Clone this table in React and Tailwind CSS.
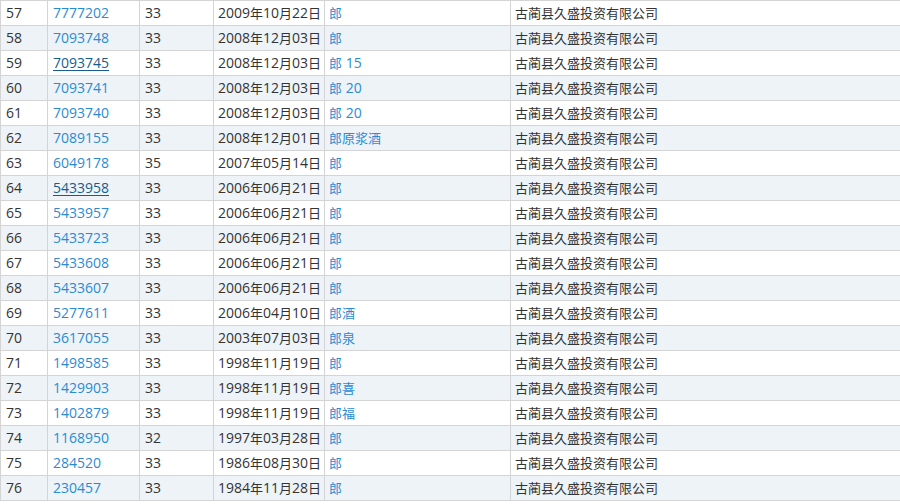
import React from "react";

const rows = [
  [57, "7777202", "33", "2009年10月22日", "郎"],
  [58, "7093748", "33", "2008年12月03日", "郎"],
  [59, "7093745", "33", "2008年12月03日", "郎 15", true],
  [60, "7093741", "33", "2008年12月03日", "郎 20"],
  [61, "7093740", "33", "2008年12月03日", "郎 20"],
  [62, "7089155", "33", "2008年12月01日", "郎原浆酒"],
  [63, "6049178", "35", "2007年05月14日", "郎"],
  [64, "5433958", "33", "2006年06月21日", "郎", true],
  [65, "5433957", "33", "2006年06月21日", "郎"],
  [66, "5433723", "33", "2006年06月21日", "郎"],
  [67, "5433608", "33", "2006年06月21日", "郎"],
  [68, "5433607", "33", "2006年06月21日", "郎"],
  [69, "5277611", "33", "2006年04月10日", "郎酒"],
  [70, "3617055", "33", "2003年07月03日", "郎泉"],
  [71, "1498585", "33", "1998年11月19日", "郎"],
  [72, "1429903", "33", "1998年11月19日", "郎喜"],
  [73, "1402879", "33", "1998年11月19日", "郎福"],
  [74, "1168950", "32", "1997年03月28日", "郎"],
  [75, "284520", "33", "1986年08月30日", "郎"],
  [76, "230457", "33", "1984年11月28日", "郎"],
];

// CJK glyphs render a touch smaller than the digits in the original page
function Mixed({ text }) {
  const parts = text.match(/[\u4e00-\u9fff]+|[^\u4e00-\u9fff]+/g) || [];
  return parts.map((p, i) =>
    /[\u4e00-\u9fff]/.test(p) ? (
      <span key={i} className="text-[13px]">
        {p}
      </span>
    ) : (
      <span key={i}>{p}</span>
    )
  );
}

export default function App() {
  return (
    <div
      className="w-[900px] h-[504px] overflow-hidden bg-white text-[14px] text-[#333]"
      style={{ fontFamily: '"Open Sans", "Noto Sans CJK SC", sans-serif' }}
    >
      <div className="w-[1100px] border-t border-l border-[#d4d4d4]">
        {rows.map(([no, reg, cls, date, name, visited], i) => (
          <div
            key={no}
            className={`flex h-[25px] border-b border-[#d4d4d4] leading-[24px] ${
              i % 2 === 1 ? "bg-[#eef3f8]" : "bg-white"
            }`}
          >
            <div className="w-[47px] shrink-0 border-r border-[#d4d4d4] pl-[5px]">{no}</div>
            <div className="w-[92px] shrink-0 border-r border-[#d4d4d4] pl-[5px]">
              <a
                href="#"
                className={visited ? "text-[#165d8c] underline underline-offset-2" : "text-[#2a8bd4]"}
              >
                {reg}
              </a>
            </div>
            <div className="w-[74px] shrink-0 border-r border-[#d4d4d4] pl-[5px]">{cls}</div>
            <div className="w-[111px] shrink-0 border-r border-[#d4d4d4] pl-[4px] whitespace-nowrap">
              <Mixed text={date} />
            </div>
            <div className="w-[186px] shrink-0 border-r border-[#d4d4d4] pl-[4px] text-[#2a8bd4] whitespace-nowrap">
              <Mixed text={name} />
            </div>
            <div className="flex-1 border-r border-[#d4d4d4] pl-[4px] whitespace-nowrap text-[13px]">
              古蔺县久盛投资有限公司
            </div>
          </div>
        ))}
      </div>
    </div>
  );
}
